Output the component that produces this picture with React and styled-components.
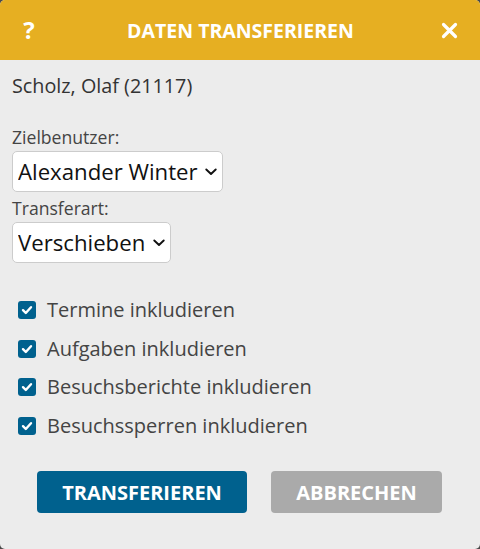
import React from "react";
import styled, { createGlobalStyle } from "styled-components";

const Global = createGlobalStyle`
  html, body { margin: 0; padding: 0; background: #4a4a4a; }
  body { font-family: "Open Sans", "Liberation Sans", sans-serif; }
  * { box-sizing: border-box; }
`;

const Dialog = styled.div`
  width: 480px;
  height: 549px;
  background: #ececec;
  border-radius: 5px;
  overflow: hidden;
  display: flex;
  flex-direction: column;
`;

const Header = styled.div`
  height: 60px;
  background: #e6af22;
  display: flex;
  align-items: center;
  justify-content: space-between;
  padding: 0 20px 0 19px;
  color: #fff;
`;

const HeaderIcon = styled.span`
  font-weight: 700;
  font-size: 24px;
  width: 20px;
  text-align: center;
  line-height: 1;
  display: inline-flex;
  justify-content: center;
`;

const Title = styled.div`
  font-weight: 700;
  font-size: 19.5px;
  margin-left: 2px;
`;

const Body = styled.div`
  padding: 13px 12px 0 12px;
  color: #333;
  display: flex;
  flex-direction: column;
`;

const Name = styled.div`
  font-size: 19.8px;
  line-height: 26px;
  margin-bottom: 27px;
`;

const Label = styled.label`
  font-size: 17.6px;
  line-height: 23px;
  color: #444;
`;

const SelectWrap = styled.div`
  position: relative;
  align-self: flex-start;
  display: flex;
  margin: 2px 0 5px;
`;

const Select = styled.select`
  appearance: none;
  -webkit-appearance: none;
  font-family: "Open Sans", "Liberation Sans", sans-serif;
  font-size: 22.2px;
  color: #111;
  height: 41px;
  background: #fff;
  border: 1px solid #ccc;
  border-radius: 5px;
  padding: 0 24px 0 5px;
`;

const Chevron = styled.svg`
  position: absolute;
  right: 6px;
  top: 50%;
  margin-top: -4px;
  pointer-events: none;
`;

const Checks = styled.div`
  display: flex;
  flex-direction: column;
  gap: 12px;
  margin-top: 29px;
  padding-left: 6px;
`;

const CheckRow = styled.label`
  display: flex;
  align-items: center;
  gap: 11px;
  font-size: 20px;
  line-height: 26.5px;
  color: #444;
`;

const Box = styled.span`
  width: 18px;
  height: 18px;
  border-radius: 3px;
  background: #00618e;
  display: inline-flex;
  align-items: center;
  justify-content: center;
`;

const Buttons = styled.div`
  display: flex;
  justify-content: center;
  gap: 24px;
  margin-top: 32px;
  padding-right: 1px;
`;

const Button = styled.button`
  font-family: "Open Sans", "Liberation Sans", sans-serif;
  font-weight: 700;
  font-size: 20px;
  color: #fff;
  border: none;
  border-radius: 4px;
  height: 42px;
  padding: 0;
  width: ${(p) => p.$w}px;
  background: ${(p) => (p.$secondary ? "#aaaaaa" : "#00618e")};
`;

const Check = () => (
  <Box>
    <svg width="12" height="12" viewBox="0 0 12 12">
      <path d="M2 6.2 L4.8 9 L10 3.2" fill="none" stroke="#fff" strokeWidth="2.4" strokeLinecap="round" strokeLinejoin="round" />
    </svg>
  </Box>
);

const Dropdown = ({ value, label }) => (
  <SelectWrap>
    <Select defaultValue={value}>
      <option value={value}>{label}</option>
    </Select>
    <Chevron width="12" height="8" viewBox="0 0 12 8">
      <path d="M1.3 1.5 L6 6 L10.7 1.5" fill="none" stroke="#111" strokeWidth="1.9" strokeLinecap="round" strokeLinejoin="round" />
    </Chevron>
  </SelectWrap>
);

const items = [
  "Termine inkludieren",
  "Aufgaben inkludieren",
  "Besuchsberichte inkludieren",
  "Besuchssperren inkludieren",
];

export default function App() {
  return (
    <>
      <Global />
      <Dialog>
        <Header>
          <HeaderIcon>?</HeaderIcon>
          <Title>DATEN TRANSFERIEREN</Title>
          <HeaderIcon>
            <svg width="17" height="17" viewBox="0 0 17 17">
              <path d="M2.5 2.5 L14.5 14.5 M14.5 2.5 L2.5 14.5" stroke="#fff" strokeWidth="3.2" strokeLinecap="round" />
            </svg>
          </HeaderIcon>
        </Header>
        <Body>
          <Name>Scholz, Olaf (21117)</Name>
          <Label>Zielbenutzer:</Label>
          <Dropdown value="aw" label="Alexander Winter" />
          <Label>Transferart:</Label>
          <Dropdown value="v" label="Verschieben" />
          <Checks>
            {items.map((t) => (
              <CheckRow key={t}>
                <Check />
                {t}
              </CheckRow>
            ))}
          </Checks>
          <Buttons>
            <Button $w={210}>TRANSFERIEREN</Button>
            <Button $w={171} $secondary>ABBRECHEN</Button>
          </Buttons>
        </Body>
      </Dialog>
    </>
  );
}
